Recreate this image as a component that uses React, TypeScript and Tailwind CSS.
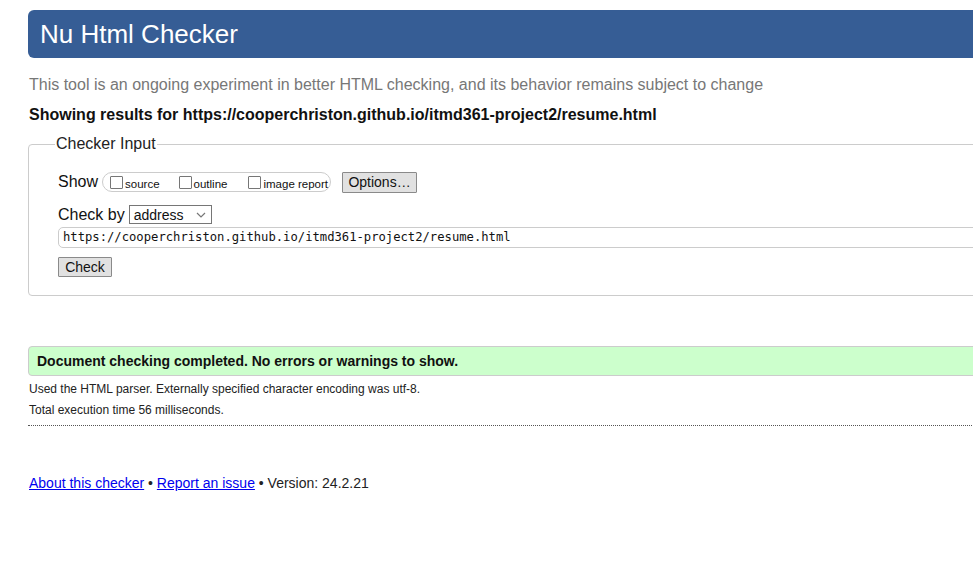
import React from 'react';

const sans = "font-['Liberation_Sans',Arial,sans-serif]";

const Box: React.FC<{ label: string; className?: string }> = ({ label, className }) => (
  <span className={`flex items-center ${className ?? ''}`}>
    <span className="w-[13px] h-[13px] border border-[#767676] bg-white rounded-[1px]" />
    <span className="ml-[2px] text-[11.5px] leading-[14px] mt-[3px]">{label}</span>
  </span>
);

const App: React.FC = () => {
  return (
    <div className={`w-[973px] h-[567px] overflow-hidden bg-white text-[#111] ${sans}`}>
      <div className="ml-[28px] w-[1100px]">
        <header className="mt-[10px] h-[48px] bg-[#365d95] rounded-l-[6px] pl-[12px] text-white text-[26px] leading-[48px]">
          Nu Html Checker
        </header>

        <p className="mt-[18px] ml-[1px] text-[16px] leading-[18px] text-[#777]">
          This tool is an ongoing experiment in better HTML checking, and its behavior remains subject to change
        </p>
        <p className="mt-[12px] ml-[1px] text-[16px] leading-[18px] font-bold text-[#111]">
          Showing results for https://cooperchriston.github.io/itmd361-project2/resume.html
        </p>

        <fieldset className="mt-[11px] border border-[#ccc] rounded-l-[4px] pl-[29px] pb-[18px]">
          <legend className="-ml-[3px] px-[1px] text-[16px] leading-[18px] text-[#222]">Checker Input</legend>

          <div className="mt-[18px] h-[22px] flex items-center">
            <span className="text-[16px] leading-[18px]">Show</span>
            <span className="ml-[4px] h-[20px] w-[229px] border border-[#ccc] rounded-[10px] flex items-center pl-[7px]">
              <Box label="source" />
              <Box label="outline" className="ml-[19px]" />
              <Box label="image report" className="ml-[21px]" />
            </span>
            <button className="ml-[11px] h-[21px] w-[75px] border border-[#8a8a8a] bg-[#e1e1e1] text-[14px] leading-[16px] text-[#111] rounded-[1px]">
              Options…
            </button>
          </div>

          <div className="mt-[12px] h-[19px] flex items-center">
            <span className="text-[16px] leading-[18px]">Check by</span>
            <span className="ml-[4px] h-[19px] w-[83px] border border-[#767676] flex items-center justify-between pl-[4px] pr-[4px] text-[14px] leading-[16px] bg-white">
              <span>address</span>
              <svg width="10" height="6" viewBox="0 0 10 6" className="mr-[1px]">
                <path d="M1 1l4 4 4-4" fill="none" stroke="#777" strokeWidth="1.2" />
              </svg>
            </span>
          </div>

          <div className="mt-[3px] h-[21px] border border-[#ccc] rounded-l-[5px] pl-[4px] flex items-center font-['DejaVu_Sans_Mono',monospace] text-[12.2px] text-[#111]">
            https://cooperchriston.github.io/itmd361-project2/resume.html
          </div>

          <button className="mt-[9px] h-[20px] w-[54px] border border-[#8a8a8a] bg-[#e1e1e1] text-[14px] leading-[16px] text-[#111] rounded-[1px] block">
            Check
          </button>
        </fieldset>

        <div className="mt-[50px] h-[30px] bg-[#ccffcc] border border-[#ccc] rounded-l-[4px] pl-[8px] pt-[1px] flex items-center text-[14px] font-bold text-[#111]">
          Document checking completed. No errors or warnings to show.
        </div>

        <div className="mt-[3px] ml-[1px] text-[12px] leading-[21px] text-[#222]">
          <p>Used the HTML parser. Externally specified character encoding was utf-8.</p>
          <p>Total execution time 56 milliseconds.</p>
        </div>

        <div className="mt-[4px] border-t border-dotted border-[#555]" />

        <p className="mt-[49px] ml-[1px] text-[14px] leading-[16px] text-[#222]">
          <a href="#" className="text-[#0000ee] underline">About this checker</a>
          {' • '}
          <a href="#" className="text-[#0000ee] underline">Report an issue</a>
          {' • Version: 24.2.21'}
        </p>
      </div>
    </div>
  );
};

export default App;
